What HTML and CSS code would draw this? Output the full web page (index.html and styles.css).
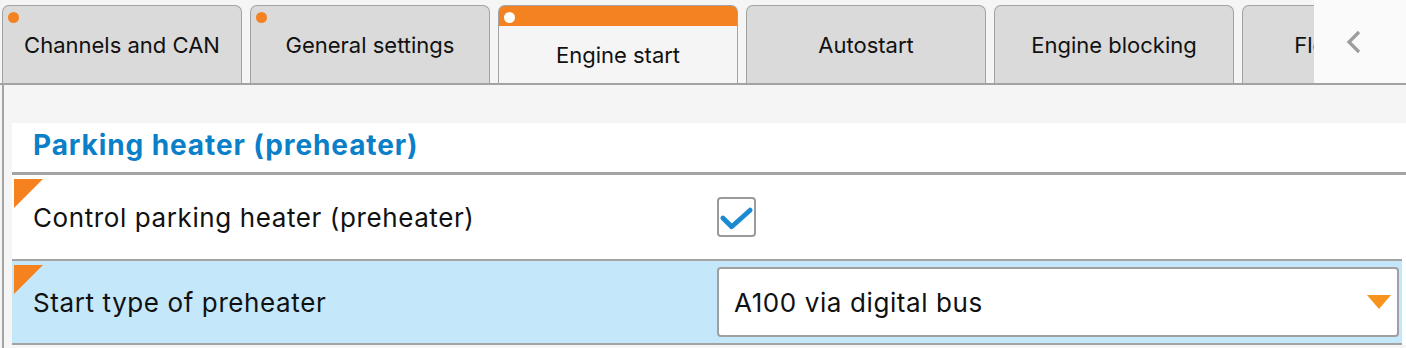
FILE: index.html
```html
<!DOCTYPE html>
<html lang="en">
<head>
<meta charset="UTF-8">
<meta name="viewport" content="width=device-width, initial-scale=1.0">
<title>Engine start</title>
<link rel="stylesheet" href="styles.css">
</head>
<body>
<div class="tabbar">
    <div class="tabs">
        <div class="tab"><span class="dot"></span>Channels and CAN</div>
        <div class="tab"><span class="dot"></span>General settings</div>
        <div class="tab active"><span class="dot"></span><span class="tab-label">Engine start</span></div>
        <div class="tab">Autostart</div>
        <div class="tab">Engine blocking</div>
        <div class="tab">Flexible logic</div>
    </div>
    <div class="scroller">
        <svg width="18" height="24" viewBox="0 0 18 24"><polyline points="14,2 4,12 14,22" fill="none" stroke="#9c9c9c" stroke-width="3.2"/></svg>
    </div>
</div>
<div class="content">
    <div class="panel">
        <div class="section-title">Parking heater (preheater)</div>
        <div class="row">
            <span class="flag"></span>
            <div class="label">Control parking heater (preheater)</div>
            <div class="value">
                <span class="checkbox">
                    <svg width="36" height="36" viewBox="0 0 36 36"><polyline points="4,19 13,28 32,11" fill="none" stroke="#1a8ad3" stroke-width="5" stroke-linecap="round" stroke-linejoin="round"/></svg>
                </span>
            </div>
        </div>
        <div class="row selected">
            <span class="flag"></span>
            <div class="label">Start type of preheater</div>
            <div class="value">
                <div class="select">
                    <span>A100 via digital bus</span>
                    <svg width="24" height="16" viewBox="0 0 24 16"><polygon points="0,1 24,1 12,15" fill="#f7941d"/></svg>
                </div>
            </div>
        </div>
    </div>
</div>
</body>
</html>
```

FILE: styles.css
```css
body {
    margin: 0;
    background: #f5f5f5;
    font-family: Inter, "Liberation Sans", sans-serif;
    color: #111;
    overflow: hidden;
}
.tabbar {
    display: flex;
    height: 85px;
    box-sizing: border-box;
    border-bottom: 2px solid #a3a3a3;
}
.tabs {
    flex: 1;
    display: flex;
    gap: 8px;
    padding: 5px 0 0 2px;
    overflow: hidden;
}
.tab {
    position: relative;
    flex: 0 0 240px;
    box-sizing: border-box;
    display: flex;
    align-items: center;
    justify-content: center;
    background: #dadada;
    border: 1px solid #a3a3a3;
    border-bottom: none;
    border-radius: 7px 7px 0 0;
    font-size: 22px;
    white-space: nowrap;
}
.tab.active {
    background: linear-gradient(#f58220 0, #f58220 20px, #f5f5f5 20px);
    padding-top: 20px;
}
.dot {
    position: absolute;
    left: 5px;
    top: 6px;
    width: 11px;
    height: 11px;
    border-radius: 50%;
    background: #f58220;
}
.tab.active .dot {
    background: #fff;
}
.scroller {
    flex: 0 0 92px;
    background: #fafafa;
    display: flex;
    align-items: center;
    padding-left: 31px;
    box-sizing: border-box;
}
.content {
    margin-left: 2px;
    border-left: 2px solid #a3a3a3;
    padding: 38px 0 0 8px;
    height: 263px;
    box-sizing: border-box;
    overflow: hidden;
}
.panel {
    background: #fff;
}
.section-title {
    height: 52px;
    display: flex;
    align-items: center;
    padding: 0 0 6px 21px;
    box-sizing: border-box;
    font-size: 28px;
    font-weight: 700;
    letter-spacing: 0.9px;
    color: #0b7fc7;
    border-bottom: 3px solid #a3a3a3;
}
.row {
    position: relative;
    display: flex;
    align-items: center;
    height: 86px;
    box-sizing: border-box;
    margin-right: 4px;
    border-bottom: 2px solid #a3a3a3;
    background: #fff;
}
.row.selected {
    background: #c4e7fa;
    height: 84px;
}
.flag {
    position: absolute;
    left: 2px;
    top: 4px;
    width: 29px;
    height: 29px;
    background: #f5821f;
    clip-path: polygon(0 0, 100% 0, 0 100%);
}
.label {
    flex: 0 0 684px;
    padding-left: 21px;
    font-size: 26px;
    letter-spacing: 0.6px;
}
.value {
    flex: 1;
    padding-right: 3px;
}
.checkbox {
    display: flex;
    align-items: center;
    justify-content: center;
    width: 39px;
    height: 40px;
    box-sizing: border-box;
    border: 2px solid #9a9a9a;
    border-radius: 4px;
    background: #fff;
}
.select {
    display: flex;
    align-items: center;
    justify-content: space-between;
    height: 70px;
    box-sizing: border-box;
    border: 2px solid #a0a0a0;
    border-radius: 4px;
    background: #fff;
    padding: 0 6px 0 15px;
    font-size: 26px;
    letter-spacing: 0.6px;
}
```
